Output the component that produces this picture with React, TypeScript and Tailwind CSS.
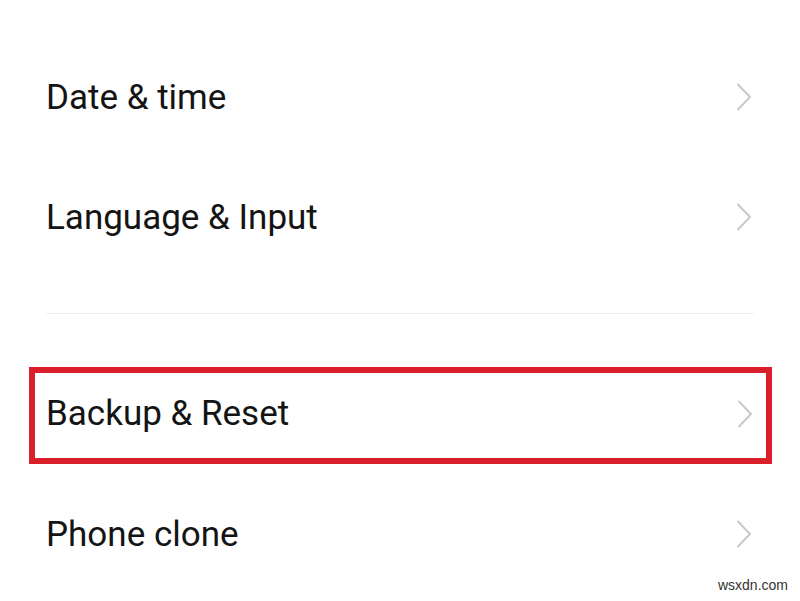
type RowProps = { label: string; className?: string; chevronClass?: string };

function SettingRow({ label, className = "", chevronClass = "mr-[20px]" }: RowProps) {
  return (
    <div className={`flex items-center justify-between ${className}`}>
      <span className="text-[35px] leading-none text-[#141414]">{label}</span>
      <svg width="16" height="28" viewBox="0 0 16 28" className={chevronClass}>
        <path d="M2 1.5 L14 14 L2 26.5" fill="none" stroke="#c9c9c9" strokeWidth="2" strokeLinecap="round" />
      </svg>
    </div>
  );
}

export default function App() {
  return (
    <div className="relative w-[800px] h-[601px] bg-white overflow-hidden" style={{ fontFamily: "Roboto, 'Noto Sans', sans-serif" }}>
      <div className="flex flex-col pt-[37px]">
        <SettingRow label="Date & time" className="h-[120px] pl-[46px] pr-[28px]" />
        <SettingRow label="Language & Input" className="h-[120px] pl-[46px] pr-[28px]" />
        <div className="h-[36px]" />
        <div className="mx-[46px] h-px bg-[#efefef]" />
        <div className="h-[53px]" />
        <div className="ml-[29px] mr-[28px] h-[97px] border-[6px] border-[#d81f2a] flex flex-col justify-center">
          <SettingRow label="Backup & Reset" className="pl-[11px] pb-[4px]" chevronClass="mr-[13px]" />
        </div>
        <div className="h-[10px]" />
        <SettingRow label="Phone clone" className="h-[120px] pl-[46px] pr-[28px]" />
      </div>
      <span className="absolute right-[12px] bottom-[5px] text-[14px] text-[#333]" style={{ fontFamily: "'Liberation Sans', Arial, sans-serif" }}>
        wsxdn.com
      </span>
    </div>
  );
}
